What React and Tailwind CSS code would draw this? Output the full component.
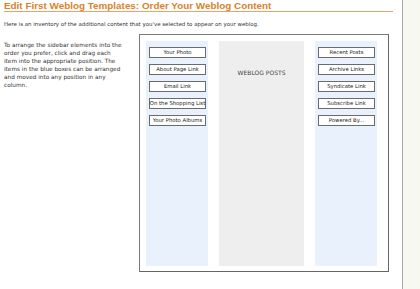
export default function App() {
  const left = ["Your Photo", "About Page Link", "Email Link", "On the Shopping List", "Your Photo Albums"];
  const right = ["Recent Posts", "Archive Links", "Syndicate Link", "Subscribe Link", "Powered By..."];
  const Item = ({ t }) => (
    <div className="h-[11px] border border-[#6b6b6b] bg-white flex justify-center text-[5.3px] leading-[9px] whitespace-nowrap text-[#222]">
      {t}
    </div>
  );
  return (
    <div className="flex h-[289px] w-[420px] bg-white overflow-hidden" style={{ fontFamily: '"DejaVu Sans", Verdana, sans-serif' }}>
      <div className="w-[402px] pl-[4px] pr-[9px]">
        <h1 className="text-[9.9px] leading-[11px] font-bold text-[#d9822b] border-b border-[#e6a46a] whitespace-nowrap" style={{ fontFamily: '"Liberation Sans", Arial, sans-serif' }}>
          Edit First Weblog Templates: Order Your Weblog Content
        </h1>
        <p className="mt-[9px] text-[5.45px] leading-[7px] text-[#333] whitespace-nowrap">
          Here is an inventory of the additional content that you've selected to appear on your weblog.
        </p>
        <div className="flex mt-[6px]">
          <p className="w-[119px] mr-[16px] pt-[7px] text-[5.75px] leading-[8px] text-[#333]">
            To arrange the sidebar elements into the order you prefer, click and drag each item into the appropriate position. The items in the blue boxes can be arranged and moved into any position in any column.
          </p>
          <div className="w-[250px] h-[238px] border border-[#7a7a7a] border-r-[#666] border-b-[#666] pt-[6px] pl-[6px] pr-[11px] pb-[5px] flex gap-[11px]">
            <div className="w-[62px] h-[225px] bg-[#e9f1fd] pt-[6px] pl-[3px] pr-[2px] flex flex-col gap-[6px]">
              {left.map((t) => <Item key={t} t={t} />)}
            </div>
            <div className="w-[85px] h-[225px] bg-[#eeeeee] pt-[28px] text-center text-[6px] leading-[8px] text-[#444]">
              WEBLOG POSTS
            </div>
            <div className="w-[62px] h-[225px] bg-[#e9f1fd] pt-[6px] pl-[3px] pr-[2px] flex flex-col gap-[6px]">
              {right.map((t) => <Item key={t} t={t} />)}
            </div>
          </div>
        </div>
      </div>
      <div className="w-px bg-[#aaaaaa]" />
      <div className="flex-1 bg-[#f7f9f0]" />
    </div>
  );
}
